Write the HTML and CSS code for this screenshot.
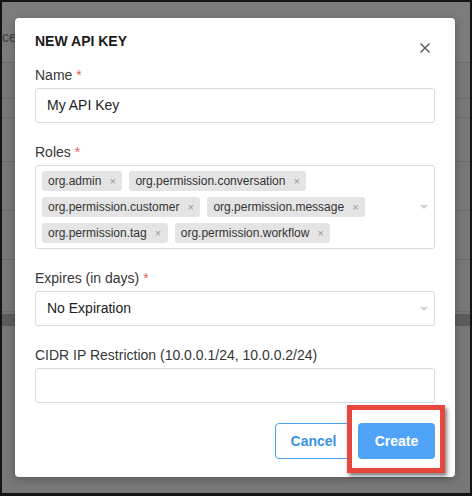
FILE: index.html
```html
<!DOCTYPE html>
<html lang="en">
<head>
    <meta charset="UTF-8">
    <meta name="viewport" content="width=device-width, initial-scale=1.0">
    <title>New API Key</title>
    <link rel="stylesheet" href="styles.css">
</head>
<body>
    <div class="screen">
        <!-- page behind the overlay -->
        <div class="backdrop">
            <div class="bg-row bg-head"><span class="bg-text">Device</span></div>
            <div class="bg-row" style="height: 36px"></div>
            <div class="bg-row" style="height: 19px"></div>
            <div class="bg-row" style="height: 44px"></div>
            <div class="bg-row" style="height: 49px"></div>
            <div class="bg-row" style="height: 49px"></div>
            <div class="bg-row" style="height: 52px"></div>
            <div class="bg-band"></div>
        </div>

        <div class="modal">
            <div class="modal-header">
                <h1>NEW API KEY</h1>
                <svg class="close" width="10" height="10" viewBox="0 0 10 10">
                    <path d="M0.5 0.5L9.5 9.5M9.5 0.5L0.5 9.5" stroke="#555" stroke-width="1.4" fill="none"/>
                </svg>
            </div>

            <div class="field">
                <label>Name <span class="req">*</span></label>
                <div class="input">My API Key</div>
            </div>

            <div class="field">
                <label>Roles <span class="req">*</span></label>
                <div class="input multi">
                    <span class="tag">org.admin<i>&times;</i></span>
                    <span class="tag">org.permission.conversation<i>&times;</i></span>
                    <span class="tag">org.permission.customer<i>&times;</i></span>
                    <span class="tag">org.permission.message<i>&times;</i></span>
                    <span class="tag">org.permission.tag<i>&times;</i></span>
                    <span class="tag">org.permission.workflow<i>&times;</i></span>
                    <span class="caret"></span>
                </div>
            </div>

            <div class="field">
                <label>Expires (in days) <span class="req">*</span></label>
                <div class="input select">No Expiration<span class="caret"></span></div>
            </div>

            <div class="field">
                <label>CIDR IP Restriction (10.0.0.1/24, 10.0.0.2/24)</label>
                <div class="input"></div>
            </div>

            <div class="actions">
                <button type="button" class="btn btn-cancel">Cancel</button>
                <span class="highlight-wrap">
                    <button type="button" class="btn btn-create">Create</button>
                    <span class="highlight"></span>
                </span>
            </div>
        </div>
    </div>
</body>
</html>
```

FILE: styles.css
```css
* {
    box-sizing: border-box;
}
body {
    margin: 0;
    padding: 0;
    font-family: "Liberation Sans", Arial, sans-serif;
    overflow: hidden;
}
.screen {
    position: relative;
    width: 472px;
    height: 496px;
    border: 2px solid #141414;
    border-bottom-width: 3px;
    background-color: #777;
    overflow: hidden;
}
.backdrop {
    display: flex;
    flex-direction: column;
}
.bg-row {
    border-bottom: 1px solid #6a6a6a;
}
.bg-head {
    height: 61px;
    background-color: #7c7c7c;
}
.bg-text {
    display: block;
    margin: 27px 0 0 -28px;
    font-size: 14px;
    color: #3c3c3c;
}
.bg-band {
    height: 12px;
    margin-top: 2px;
    background-color: #5c5c5c;
}
.modal {
    position: absolute;
    left: 13px;
    top: 16px;
    width: 440px;
    height: 459px;
    padding: 13px 20px 19px;
    background-color: #fff;
    border-radius: 4px;
    box-shadow: 0 2px 8px rgba(0, 0, 0, 0.25);
}
.modal-header {
    display: flex;
    justify-content: space-between;
    align-items: flex-start;
    height: 20px;
    margin-bottom: 14px;
}
.modal-header h1 {
    margin: 0;
    font-size: 14px;
    line-height: 20px;
    font-weight: bold;
    color: #1b1b1b;
}
.close {
    margin-top: 12px;
    margin-right: 5px;
}
.field {
    margin-bottom: 19px;
}
.field label {
    display: block;
    font-size: 14px;
    line-height: 20px;
    color: #363636;
    margin-bottom: 3px;
}
.req {
    color: #e06464;
}
.input {
    position: relative;
    height: 35px;
    padding: 0 11px;
    border: 1px solid #dadada;
    border-radius: 3px;
    font-size: 14px;
    line-height: 33px;
    color: #222;
}
.multi {
    display: flex;
    flex-wrap: wrap;
    gap: 6px 7px;
    height: auto;
    padding: 5px 30px 5px 6px;
    line-height: 20px;
}
.tag {
    display: flex;
    align-items: center;
    height: 20px;
    padding: 0 6px;
    border-radius: 3px;
    background-color: #e4e4e4;
    font-size: 12px;
    color: #333;
}
.tag i {
    font-style: normal;
    font-size: 11px;
    color: #999;
    margin-left: 8px;
    width: 7px;
}
.caret {
    position: absolute;
    right: 6px;
    top: 50%;
    margin-top: -2px;
    border-left: 4px solid transparent;
    border-right: 4px solid transparent;
    border-top: 4px solid #d0d0d0;
}
.actions {
    display: flex;
    justify-content: flex-end;
    gap: 6px;
    margin-top: 20px;
}
.btn {
    height: 36px;
    border-radius: 4px;
    font-family: "Liberation Sans", Arial, sans-serif;
    font-size: 14px;
    font-weight: bold;
    cursor: pointer;
}
.btn-cancel {
    width: 77px;
    border: 1px solid #4a9ff0;
    background-color: #fff;
    color: #3d92e4;
}
.btn-create {
    width: 77px;
    border: none;
    background-color: #4ea3f8;
    color: #fff;
}
.highlight-wrap {
    position: relative;
    display: flex;
}
.highlight {
    position: absolute;
    left: -11px;
    right: -10px;
    top: -18px;
    bottom: -14px;
    border: 5px solid #e8473d;
    box-shadow: 2px 3px 4px rgba(0, 0, 0, 0.5);
}
```
